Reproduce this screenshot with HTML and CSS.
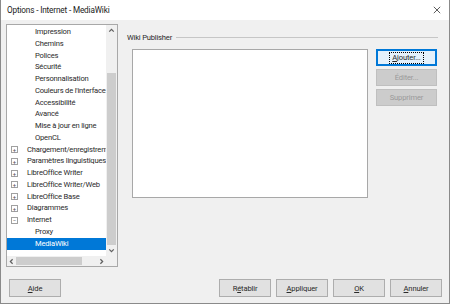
FILE: index.html
```html
<!DOCTYPE html>
<html lang="fr">
<head>
<meta charset="UTF-8" />
<title>Options - Internet - MediaWiki</title>
<link rel="stylesheet" href="styles.css">
</head>
<body>
<div class="window">

  <!-- Title bar -->
  <div class="titlebar">
    <span class="title">Options - Internet - MediaWiki</span>
    <svg class="close" viewBox="0 0 10 10" aria-hidden="true">
      <path d="M1 1 L9 9 M9 1 L1 9" />
    </svg>
  </div>

  <div class="content">
    <!-- Left tree with scrollbars -->
    <div class="tree">
      <ul class="tree-list">
        <li class="child">Impression</li>
        <li class="child">Chemins</li>
        <li class="child">Polices</li>
        <li class="child">Sécurité</li>
        <li class="child">Personnalisation</li>
        <li class="child">Couleurs de l'interface</li>
        <li class="child">Accessibilité</li>
        <li class="child">Avancé</li>
        <li class="child">Mise à jour en ligne</li>
        <li class="child">OpenCL</li>
        <li class="node"><span class="exp">+</span>Chargement/enregistrement</li>
        <li class="node"><span class="exp">+</span>Paramètres linguistiques</li>
        <li class="node"><span class="exp">+</span>LibreOffice Writer</li>
        <li class="node"><span class="exp">+</span>LibreOffice Writer/Web</li>
        <li class="node"><span class="exp">+</span>LibreOffice Base</li>
        <li class="node"><span class="exp">+</span>Diagrammes</li>
        <li class="node"><span class="exp">−</span>Internet</li>
        <li class="child">Proxy</li>
        <li class="child selected">MediaWiki</li>
      </ul>
      <div class="vscroll">
        <svg class="arrow" viewBox="0 0 8 8"><path d="M2 5 L4 3 L6 5" /></svg>
        <div class="vtrack"><div class="vthumb"></div></div>
        <svg class="arrow" viewBox="0 0 8 8"><path d="M2 3 L4 5 L6 3" /></svg>
      </div>
      <div class="hscroll">
        <svg class="arrow" viewBox="0 0 8 8"><path d="M5 2 L3 4 L5 6" /></svg>
        <div class="htrack"><div class="hthumb"></div></div>
        <svg class="arrow" viewBox="0 0 8 8"><path d="M3 2 L5 4 L3 6" /></svg>
      </div>
      <div class="corner"></div>
    </div>

    <!-- Right side: Wiki Publisher frame -->
    <div class="main">
      <div class="frame-title">
        <span>Wiki Publisher</span>
        <div class="rule"></div>
      </div>
      <div class="frame-body">
        <div class="listbox"></div>
        <div class="side-buttons">
          <button class="btn focused"><span class="focus-ring"><u>A</u>jouter...</span></button>
          <button class="btn" disabled>É<u>d</u>iter...</button>
          <button class="btn" disabled>Supprimer</button>
        </div>
      </div>
    </div>
  </div>

  <!-- Bottom buttons -->
  <div class="footer">
    <button class="btn"><u>A</u>ide</button>
    <div class="footer-right">
      <button class="btn">R<u>é</u>tablir</button>
      <button class="btn"><u>A</u>ppliquer</button>
      <button class="btn"><u>O</u>K</button>
      <button class="btn"><u>A</u>nnuler</button>
    </div>
  </div>

</div>
</body>
</html>
```

FILE: styles.css
```css
/* Base */
body {
  margin: 0;
  background: #ffffff;
  font-family: Roboto, "Noto Sans", sans-serif;
  font-size: 7.6px;
  letter-spacing: -0.2px;
  color: #2a2a2a;
}

.window {
  width: 450px;
  height: 304px;
  box-sizing: border-box;
  border: 1px solid #8a8a8a;
  border-top: none;
  background: #f0f0f0;
  display: flex;
  flex-direction: column;
}

/* Title bar */
.titlebar {
  height: 20px;
  background: #ffffff;
  display: flex;
  align-items: center;
  justify-content: space-between;
  padding: 0 5px 0 6px;
}
.title {
  font-size: 8.2px;
  letter-spacing: -0.15px;
  color: #1a1a1a;
}
.close {
  width: 8px;
  height: 8px;
  stroke: #333333;
  stroke-width: 1;
  fill: none;
  margin-right: 3px;
}

/* Content area */
.content {
  display: flex;
  padding: 4px 0 0 5px;
  height: 243px;
}

/* Tree */
.tree {
  width: 112px;
  height: 243px;
  box-sizing: border-box;
  border: 1px solid #a8a8a8;
  background: #ffffff;
  display: grid;
  grid-template-columns: 1fr 11px;
  grid-template-rows: 1fr 10px;
  overflow: hidden;
}
.tree-list {
  list-style: none;
  margin: 0;
  padding: 1px 0 0 0;
  overflow: hidden;
  white-space: nowrap;
}
.tree-list li {
  height: 11.77px;
  line-height: 11.77px;
  display: flex;
  align-items: center;
}
.tree-list .child {
  padding-left: 28px;
}
.tree-list .node {
  padding-left: 4px;
}
.exp {
  width: 5px;
  height: 5px;
  border: 1px solid #a0a0a0;
  font-size: 6px;
  letter-spacing: 0;
  line-height: 5px;
  text-align: center;
  color: #555555;
  margin-right: 9px;
  flex: none;
}
.tree-list .selected {
  background: #0078d7;
  color: #ffffff;
}

/* Scrollbars */
.vscroll {
  background: #f0f0f0;
  display: flex;
  flex-direction: column;
  align-items: center;
}
.vtrack {
  flex: 1;
  width: 9px;
  padding: 37px 0 0 0;
  box-sizing: border-box;
  display: flex;
}
.vthumb {
  flex: 1;
  background: #cdcdcd;
}
.hscroll {
  background: #f0f0f0;
  display: flex;
  align-items: center;
}
.htrack {
  flex: 1;
  height: 8px;
  display: flex;
}
.hthumb {
  width: 66px;
  background: #cdcdcd;
}
.corner {
  background: #f0f0f0;
}
.arrow {
  width: 9px;
  height: 11px;
  stroke: #606060;
  stroke-width: 1.1;
  fill: none;
  flex: none;
}
.hscroll .arrow {
  width: 9px;
  height: 9px;
}

/* Right side frame */
.main {
  flex: 1;
  padding: 7px 11px 0 9px;
  display: flex;
  flex-direction: column;
}
.frame-title {
  display: flex;
  align-items: center;
  gap: 4px;
  height: 12px;
}
.rule {
  flex: 1;
  height: 1px;
  background: #c6c6c6;
}
.frame-body {
  display: flex;
  padding: 6px 0 0 5px;
  gap: 8px;
}
.listbox {
  width: 236px;
  height: 149px;
  box-sizing: border-box;
  border: 1px solid #a8a8a8;
  background: #ffffff;
}
.side-buttons {
  display: flex;
  flex-direction: column;
  gap: 3px;
}
.side-buttons .btn {
  width: 61px;
  height: 17px;
}

/* Buttons */
.btn {
  font-family: Roboto, "Noto Sans", sans-serif;
  font-size: 7.6px;
  letter-spacing: -0.15px;
  color: #2a2a2a;
  background: #e1e1e1;
  border: 1px solid #adadad;
  width: 52px;
  height: 18px;
  padding: 0;
  display: flex;
  align-items: center;
  justify-content: center;
}
.btn u {
  text-decoration-thickness: 1px;
}
.btn:disabled {
  background: #cccccc;
  border-color: #bfbfbf;
  color: #9a9a9a;
}
.btn:disabled u {
  text-decoration: none;
}
.btn.focused {
  border-color: #0078d7;
  background: #e5f1fb;
  box-shadow: inset 0 0 0 1px #0078d7;
}
.focus-ring {
  outline: 1px dotted #000000;
  padding: 0 2px;
  line-height: 10px;
}

/* Footer */
.footer {
  display: flex;
  justify-content: space-between;
  padding: 12px 7px 0 8px;
}
.footer-right {
  display: flex;
  gap: 5px;
}
```
